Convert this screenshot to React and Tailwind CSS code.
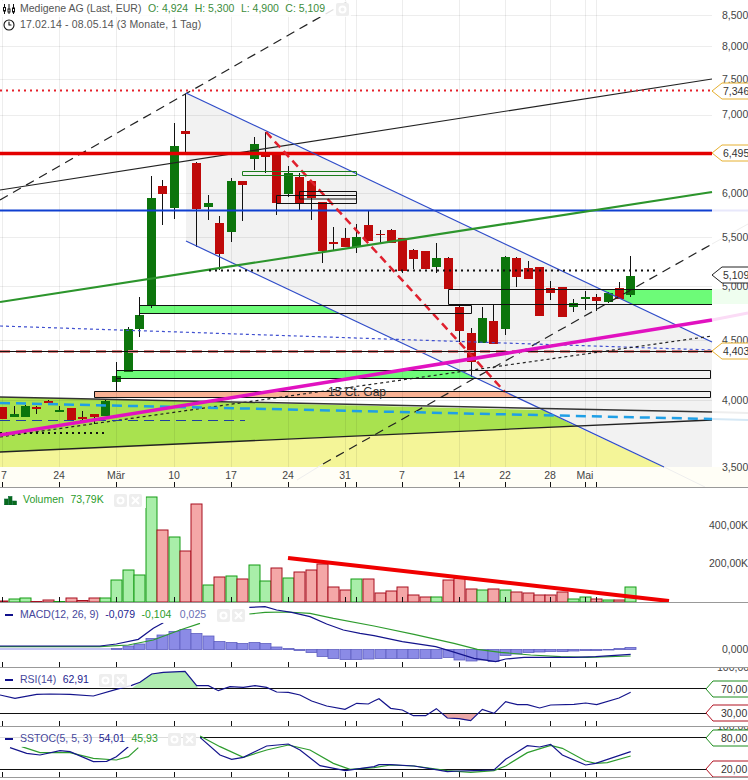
import React from "react";
import { Clock3 } from "lucide-react";

const GREEN = "#0c750c";
const RED = "#bf0a0a";
const TICKS = [2, 59, 116, 174, 231, 288, 345, 356, 402, 459, 505, 550, 585, 596];

// x, wick top, wick bottom, body top, body bottom, up?
const CANDLES = [
  [2, 407, 419, 407, 419, 0], [14, 406, 417, 414, 417, 1], [25, 405, 417, 406, 417, 1], [36, 406, 414, 407, 409, 0],
  [48, 400, 404, 401, 403, 0], [59, 406, 412, 410, 412, 1], [71, 408, 420, 408, 420, 0], [82, 411, 420, 417, 419, 0],
  [94, 414, 424, 414, 417, 0], [105, 400, 416, 401, 416, 1], [116, 370, 392, 376, 382, 1], [128, 327, 372, 329, 372, 1],
  [139, 305, 337, 315, 329, 1], [151, 176, 308, 198, 305, 1], [162, 180, 225, 186, 194, 0], [174, 123, 219, 146, 208, 1],
  [185, 94, 152, 131, 134, 0], [196, 162, 247, 163, 209, 0], [208, 195, 220, 203, 207, 1], [219, 216, 270, 223, 254, 0],
  [231, 178, 242, 181, 232, 1], [242, 181, 221, 181, 185, 0], [254, 137, 170, 144, 159, 1], [265, 132, 173, 153, 157, 0],
  [276, 154, 215, 154, 203, 0], [288, 166, 197, 173, 194, 1], [299, 173, 210, 177, 203, 0], [311, 181, 220, 181, 198, 0],
  [322, 202, 263, 202, 251, 0], [333, 227, 250, 242, 244, 0], [345, 228, 247, 238, 247, 0], [356, 224, 253, 237, 247, 1],
  [368, 210, 241, 225, 241, 0], [380, 230, 243, 234, 235, 0], [391, 229, 243, 230, 243, 0], [402, 238, 273, 238, 271, 0],
  [413, 249, 269, 250, 259, 0], [425, 251, 269, 251, 269, 0], [436, 243, 273, 258, 267, 1], [448, 257, 289, 258, 289, 0],
  [459, 305, 342, 307, 331, 0], [471, 328, 377, 333, 362, 0], [482, 307, 343, 318, 343, 1], [493, 305, 344, 321, 344, 0],
  [505, 256, 335, 257, 329, 1], [516, 257, 287, 258, 277, 0], [528, 261, 279, 268, 279, 0], [539, 267, 316, 267, 316, 0],
  [550, 281, 300, 288, 293, 0], [562, 287, 317, 287, 317, 0], [573, 299, 312, 303, 307, 1], [585, 291, 310, 297, 299, 1],
  [596, 294, 311, 297, 301, 0], [608, 292, 303, 293, 302, 1], [619, 282, 299, 288, 299, 0], [630, 256, 297, 276, 295, 1],
];

// x, top, up?
const VOLUME = [
  [2, 601, 0], [14, 599, 1], [25, 598, 1], [36, 601.5, 0], [48, 600, 0], [59, 601.5, 1], [71, 598, 0], [82, 600.5, 0],
  [94, 598, 0], [105, 598, 1], [116, 580, 1], [128, 570, 1], [139, 575, 1], [151, 497, 1], [162, 530, 0], [174, 537, 1],
  [185, 551, 0], [196, 504, 0], [208, 585, 1], [219, 577, 0], [231, 576, 1], [242, 579, 0], [254, 565, 1], [265, 581, 1],
  [276, 568, 0], [288, 578, 1], [299, 572, 0], [311, 570, 0], [322, 564, 0], [333, 587, 0], [345, 590, 0], [356, 579, 1],
  [368, 579, 0], [380, 593, 0], [391, 591, 0], [402, 587, 0], [413, 595, 0], [425, 597, 0], [436, 597, 1], [448, 580, 0],
  [459, 578, 0], [471, 589, 0], [482, 590, 1], [493, 589, 0], [505, 590, 1], [516, 592, 0], [528, 593, 0], [539, 595, 0],
  [550, 595, 0], [562, 592, 0], [573, 599, 1], [585, 597, 1], [596, 599, 0], [608, 600, 1], [619, 600, 0], [630, 587, 1],
];

const MACD_BARS = [
  [116, 648.5], [128, 646], [139, 644], [151, 638.5], [162, 635], [174, 631.5], [185, 629.5], [196, 633.5], [208, 636],
  [219, 641.5], [231, 642.5], [242, 643.5], [254, 642.5], [265, 643.5], [276, 647], [288, 648.5], [299, 650.5], [311, 652.5],
  [322, 656.5], [333, 658.5], [345, 659.5], [356, 659.5], [368, 659], [380, 658.5], [391, 658.5], [402, 658.5], [413, 658.5],
  [425, 658.5], [436, 658.5], [448, 657.5], [459, 660], [471, 661], [482, 660], [493, 661.5], [505, 655.5], [516, 654],
  [528, 652.5], [539, 652], [550, 651.5], [562, 651.5], [573, 651], [585, 650.5], [596, 650.5], [608, 650], [619, 648.5], [630, 647.5],
];

const left = (pts) => pts.map(([x, y]) => `${x / 3},${600 + y / 3}`).join(" ");
const right = (pts) => pts.map(([x, y]) => `${374 + x / 3},${600 + y / 3}`).join(" ");

const MACD_NAVY = [
  left([[0, 138], [300, 138], [349, 132], [415, 118], [460, 85], [490, 68]]),
  left([[748, 22], [795, 20], [830, 30], [875, 37], [930, 50], [980, 72], [1030, 90], [1080, 100]]) + " " +
    right([[0, 107], [85, 125], [185, 140], [235, 155], [300, 175], [365, 185], [395, 177], [450, 172], [530, 172], [600, 172], [665, 170], [770, 163]]),
];
const MACD_SIGNAL = [
  left([[0, 140], [300, 140], [385, 135], [460, 120], [540, 90], [600, 70]]),
  left([[748, 42], [795, 37], [860, 36], [930, 40], [1000, 55]]) + " " +
    right([[0, 78], [120, 103], [240, 130], [310, 148], [380, 157], [470, 165], [560, 170], [640, 172], [770, 168]]),
];
const RSI_LINE =
  left([[0, 285], [45, 295], [110, 283], [150, 282], [210, 283], [280, 288], [349, 268], [395, 256], [420, 247], [455, 222], [490, 217], [555, 214], [590, 257], [625, 257], [655, 272], [690, 260], [730, 262], [765, 257], [800, 262], [830, 276], [865, 277], [900, 285], [935, 303], [980, 318], [1035, 328], [1070, 310], [1105, 312]]) + " " +
  right([[0, 303], [15, 296], [50, 325], [85, 330], [118, 347], [155, 347], [187, 326], [220, 354], [255, 356], [290, 362], [325, 328], [360, 340], [395, 305], [430, 314], [460, 314], [497, 324], [530, 315], [600, 313], [635, 309], [668, 314], [735, 294], [770, 277]]);
const STOC_NAVY = [
  left([[30, 443], [80, 460], [120, 465], [180, 452], [210, 455], [280, 485], [320, 484], [349, 470], [385, 440]]),
  left([[600, 412], [660, 465], [695, 478], [730, 472], [800, 438], [865, 432], [900, 450], [960, 497], [1036, 512]]) + " " +
    right([[0, 500], [15, 494], [50, 494], [120, 498], [220, 515], [255, 513], [300, 512], [360, 510], [395, 478], [460, 437], [497, 441], [530, 433], [565, 465], [635, 495], [665, 490], [770, 455]]),
];
const STOC_SIGNAL = [
  left([[65, 440], [120, 458], [210, 458], [280, 475], [349, 480], [385, 470], [415, 443]]),
  left([[600, 408], [660, 440], [730, 472], [800, 450], [865, 435], [930, 450], [1000, 490], [1050, 508]]) + " " +
    right([[0, 503], [50, 495], [120, 498], [220, 512], [290, 517], [360, 512], [395, 498], [460, 458], [530, 436], [565, 445], [635, 483], [665, 490], [700, 488], [770, 468]]),
];

const Label = ({ x, y, children, anchor = "start", className = "fill-[#444]" }) => (
  <text x={x} y={y + 3.5} textAnchor={anchor} className={className}>
    {children}
  </text>
);

const Tag = ({ y, tip, body, textX, color, fill = "#fff", children }) => (
  <>
    <polygon
      points={`${tip},${y} ${body},${y - 8} 760,${y - 8} 760,${y + 8} ${body},${y + 8}`}
      fill={fill}
      stroke={color}
    />
    <Label x={textX} y={y} className="fill-[#333]">{children}</Label>
  </>
);

const Ticks = ({ bottom }) =>
  TICKS.map((x) => <line key={x} x1={x + 0.5} x2={x + 0.5} y1={bottom - 5} y2={bottom} stroke="#111" />);

const Line = ({ d, color, width = 1, dash, cap }) => {
  const [x1, y1, x2, y2] = d;
  return <line x1={x1} y1={y1} x2={x2} y2={y2} stroke={color} strokeWidth={width} strokeDasharray={dash} strokeLinecap={cap} />;
};

const Poly = ({ points, color, width = 1.2 }) => <polyline points={points} fill="none" stroke={color} strokeWidth={width} />;

const PaneButton = ({ kind }) => (
  <span className="w-[13px] h-[13px] rounded-[2px] bg-[#eeeeee] flex items-center justify-center">
    <svg width="9" height="9" viewBox="0 0 9 9" fill="none" stroke="#fff" strokeWidth="2">
      {kind === "gear" ? <circle cx="4.5" cy="4.5" r="3" /> : <path d="M1 1l7 7M8 1l-7 7" />}
    </svg>
  </span>
);

const PaneButtons = ({ close = true }) => (
  <span className="flex gap-[2px] ml-1">
    <PaneButton kind="gear" />
    {close && <PaneButton kind="close" />}
  </span>
);

const Dash = () => <span className="block w-[8px] h-[2px] bg-[#11118c] ml-px" />;

const Legend = ({ icon, children }) => (
  <div className="absolute left-0 top-[4px] h-4 flex items-center gap-[6.5px] bg-white/85 pr-1">
    <span className="w-[13.5px] pl-[4px] flex items-center">{icon}</span>
    {children}
  </div>
);

const Pane = ({ top, height, heightClass, legend, children }) => (
  <div className={`relative shrink-0 overflow-hidden border-b border-[#999] ${heightClass}`}>
    <svg className="block" width="748" height={height - 1} viewBox={`0 ${top} 748 ${height - 1}`}>
      {children}
    </svg>
    {legend}
  </div>
);

function MainChart() {
  const prices = [
    ["8,500", 15], ["8,000", 46], ["7,500", 79], ["7,000", 114], ["6,000", 193],
    ["5,500", 237], ["5,000", 286], ["4,500", 340], ["4,000", 400], ["3,500", 467],
  ];
  const dates = [
    ["7", 4], ["24", 59], ["Mär", 116], ["10", 174], ["17", 231], ["24", 288], ["31", 345],
    ["7", 402], ["14", 459], ["22", 505], ["28", 550], ["Mai", 585],
  ];
  return (
    <>
      {/* zones, the channel fill sits on top and cuts them */}
      <polygon points="0,452 575,426 664,467 0,467" fill="#f4f598" />
      <polygon points="0,397 544,410 575,426 0,452" fill="#a9e24f" />
      <rect x="139" y="305" width="332" height="8" fill="#6dfb78" />
      <rect x="116" y="370" width="595" height="8" fill="#6dfb78" />
      <rect x="94" y="391" width="617" height="6" fill="#f8b193" />
      <rect x="448" y="289" width="264" height="15" fill="#6dfb78" />
      <rect x="712" y="289" width="36" height="15" fill="#effeef" />
      <polygon points="186,93 712,342 712,467 664,467 186,241" fill="#f2f2f2" />
      <rect x="0" y="467" width="748" height="20" fill="#fffef6" />

      {[15, 46, 79, 115, 193, 237, 286, 340, 400].map((y) => (
        <line key={y} x1="0" x2="712" y1={y + 0.5} y2={y + 0.5} stroke="#000" strokeOpacity="0.07" />
      ))}
      {TICKS.map((x) => (
        <line key={x} x1={x + 0.5} x2={x + 0.5} y1="0" y2="467" stroke="#000" strokeOpacity="0.07" />
      ))}

      {CANDLES.map(([x, wt, wb, bt, bb, up]) => (
        <g key={x}>
          <line x1={x + 0.5} x2={x + 0.5} y1={wt} y2={wb} stroke="#111" />
          <rect x={x - 4} y={bt} width="9" height={bb - bt} fill={up ? GREEN : RED} />
        </g>
      ))}

      {/* faded parts beyond the plot */}
      <Line d={[712, 320, 748, 313]} color="#fbdcf6" width={3} />
      <Line d={[712, 210.5, 748, 210.5]} color="#e8e8fb" width={2} />
      <Line d={[712, 412, 748, 413]} color="#eeeeee" width={2} />
      <Line d={[712, 419, 748, 420]} color="#d5e8f5" width={2} />
      <Line d={[297, 480, 323, 464]} color="#eeeeee" />
      <Line d={[712, 244, 748, 224]} color="#eeeeee" />
      <Line d={[664, 467, 705, 487]} color="#eeeeee" />

      <Line d={[0, 200, 350, 0]} color="#222" width={1.2} dash="9 6" />
      <Line d={[0, 190, 712, 79]} color="#222" width={1.2} />
      <Line d={[0, 90.5, 712, 90.5]} color="#e5202a" width={2} dash="2 4" />
      <Line d={[0, 153.5, 712, 153.5]} color="#e30000" width={3.5} />
      <Line d={[0, 210.5, 712, 210.5]} color="#0f3fd0" width={2} />
      <Line d={[186, 93, 712, 342]} color="#2f4cc8" width={1.2} />
      <Line d={[186, 241, 664, 467]} color="#2f4cc8" width={1.2} />
      <Line d={[0, 302, 712, 192]} color="#2c952c" width={2.2} />
      <Line d={[209, 270.5, 656, 270.5]} color="#111" width={2} dash="2 4" />
      <Line d={[323, 464, 712, 244]} color="#222" width={1.2} dash="9 6" />
      <Line d={[0, 326, 712, 350]} color="#4050d0" width={1.2} dash="3 3" />
      <Line d={[0, 351.5, 712, 351.5]} color="#d88080" width={3} dash="10 6" />
      <Line d={[0, 351.5, 712, 351.5]} color="#111" />
      <Line d={[0, 437, 712, 336]} color="#222" width={1.2} dash="3 3" />
      <Line d={[266, 132, 505, 392]} color="#e0202e" width={2.5} dash="8 5" />

      <path d="M139.5 305.5H471.5V313.5H139.5Z" fill="none" stroke="#111" />
      <path d="M116.5 370.5H710.5V378.5H116.5Z" fill="none" stroke="#111" />
      <path d="M94.5 391.5H710.5V397.5H94.5Z" fill="none" stroke="#111" />
      <path d="M712 289.5H448.5V304.5H712" fill="none" stroke="#111" />
      <path d="M242.5 171.5H356.5V175.5H242.5Z" fill="none" stroke="#1c7c1c" />
      <path d="M276.5 195.5H356.5V203.5H276.5Z" fill="none" stroke="#111" />
      <path d="M299.5 191.5H356.5V199H299.5Z" fill="none" stroke="#111" />
      <line x1="116.5" x2="116.5" y1="362" y2="392" stroke="#111" />
      <line x1="139.5" x2="139.5" y1="297" y2="316" stroke="#111" />

      <Line d={[0, 397, 712, 412]} color="#333" width={1.5} />
      <Line d={[0, 452, 712, 420]} color="#222" width={1.3} />
      <Line d={[0, 403, 712, 419]} color="#1f9fe6" width={2.5} dash="10 6" />
      <Line d={[0, 420.5, 245, 420.5]} color="#2040a0" dash="10 6" />
      <Line d={[0, 433, 106, 433]} color="#111" width={2} dash="2 4" />
      <Line d={[0, 435, 712, 320]} color="#e112c0" width={3.5} />

      <text x="328" y="396" className="fill-[#333] text-[12px]">15 Ct. Gap</text>

      {prices.map(([label, y]) => <Label key={label} x="722" y={y}>{label}</Label>)}
      <Tag y={91} tip={712} body={722} textX={723} color="#e6b030">7,346</Tag>
      <Tag y={153} tip={712} body={722} textX={723} color="#e6b030">6,495</Tag>
      <Tag y={275} tip={712} body={722} textX={723} color="#222">5,109</Tag>
      <Tag y={351} tip={712} body={722} textX={723} color="#e6b030">4,403</Tag>

      {dates.map(([label, x]) => <Label key={`${label}${x}`} x={x} y={475} anchor="middle">{label}</Label>)}
      <Ticks bottom={487} />
    </>
  );
}

export default function App() {
  return (
    <div className="w-[748px] h-[780px] overflow-hidden bg-white flex flex-col font-['Liberation_Sans',Arial,sans-serif] text-[10.5px] text-[#555]">
      <Pane
        top={0}
        height={488}
        heightClass="h-[488px]"
        legend={
          <div className="absolute left-0 top-[1px] flex flex-col">
            <div className="h-4 flex items-center gap-[6.5px] bg-white/85 pr-0.5">
              <span className="w-[13.5px] pl-[3px] flex items-center">
                <svg width="12" height="10" viewBox="0 0 12 10" fill="#fff" stroke="#111" strokeWidth="1" className="shrink-0">
                  <path d="M1.5 0v10M6 0v10M10.5 0v10" />
                  <rect x="0.5" y="3.5" width="2" height="3.5" />
                  <rect x="5" y="5" width="2" height="3" />
                  <rect x="9.5" y="4" width="2" height="4" />
                </svg>
              </span>
              <span>Medigene AG (Last, EUR)</span>
              <span className="text-[#3c8c3c]">O: 4,924</span>
              <span className="text-[#3c8c3c]">H: 5,300</span>
              <span className="text-[#3c8c3c]">L: 4,900</span>
              <span className="text-[#3c8c3c]">C: 5,109</span>
              <PaneButtons close={false} />
            </div>
            <div className="h-4 flex items-center gap-[6.5px]">
              <span className="w-[13.5px] pl-[3px] flex items-center">
                <Clock3 size={12} strokeWidth={2.2} color="#111" className="shrink-0" />
              </span>
              <span className="tracking-[0.14px]">17.02.14 - 08.05.14 (3 Monate, 1 Tag)</span>
            </div>
          </div>
        }
      >
        <MainChart />
      </Pane>

      <Pane
        top={488}
        height={115}
        heightClass="h-[115px]"
        legend={
          <Legend
            icon={
              <svg width="13" height="9" viewBox="0 0 13 9" fill="#0a6a1a" stroke="#063" strokeWidth="0.6" className="shrink-0">
                <rect x="0.5" y="3" width="3.5" height="6" />
                <rect x="4.5" y="0.5" width="3.5" height="8.5" />
                <rect x="8.5" y="5" width="4" height="4" />
              </svg>
            }
          >
            <span className="text-[#2c9c2c] ml-[3px]">Volumen</span>
            <span className="text-[#2c9c2c]">73,79K</span>
            <PaneButtons />
          </Legend>
        }
      >
        {VOLUME.map(([x, top, up]) => (
          <rect
            key={x}
            x={x - 5}
            y={top}
            width="11"
            height={602 - top}
            fill={up ? "#a9eea9" : "#f4a7a7"}
            stroke={up ? "#159c15" : "#a70f1f"}
          />
        ))}
        <Ticks bottom={602} />
        <Line d={[288, 558, 669, 601]} color="#f00000" width={4} />
        <Label x="709" y={525}>400,00K</Label>
        <Label x="709" y={563}>200,00K</Label>
      </Pane>

      <Pane
        top={603}
        height={65}
        heightClass="h-[65px]"
        legend={
          <Legend icon={<Dash />}>
            <span className="text-[#46479b]">MACD(12, 26, 9)</span>
            <span className="text-[#23238f]">-0,079</span>
            <span className="text-[#2c9c2c]">-0,104</span>
            <span className="text-[#6a6fb4] ml-[2px]">0,025</span>
            <PaneButtons />
          </Legend>
        }
      >
        <rect x="0" y="648.5" width="110" height="1" fill="#8a8ae8" />
        {MACD_BARS.map(([x, y]) => {
          const up = y < 649.5;
          return (
            <rect
              key={x}
              x={x - 5}
              y={up ? y : 649.5}
              width="11"
              height={Math.abs(y - 649.5)}
              fill="#8b8be6"
              stroke="#5f5fc0"
              strokeWidth="0.8"
            />
          );
        })}
        <Ticks bottom={667} />
        {MACD_SIGNAL.map((p) => <Poly key={p} points={p} color="#2e9c2e" />)}
        {MACD_NAVY.map((p) => <Poly key={p} points={p} color="#14148c" />)}
        <Label x="722" y={649}>0,000</Label>
      </Pane>

      <Pane
        top={668}
        height={59}
        heightClass="h-[59px]"
        legend={
          <Legend icon={<Dash />}>
            <span className="text-[#46479b]">RSI(14)</span>
            <span className="text-[#23238f]">62,91</span>
            <PaneButtons />
          </Legend>
        }
      >
        <polygon points="131.7,688.5 140,682.3 151.7,674 163.3,672.3 185,671.3 196.7,685.7 198,688.5" fill="#b0ecb0" />
        <polygon points="442,713.3 447.3,718 459,718.7 470.7,720.7 477.5,713.3" fill="#eba8a8" />
        <Label x="717" y={667}>100,00</Label>
        <Line d={[0, 688.5, 706, 688.5]} color="#111" />
        <Line d={[0, 713.5, 706, 713.5]} color="#111" />
        <Ticks bottom={726} />
        <Poly points={RSI_LINE} color="#14148c" />
        <Tag y={689} tip={706} body={713} textX={721} color="#1c8c1c">70,00</Tag>
        <Tag y={713} tip={706} body={713} textX={721} color="#b01020">30,00</Tag>
      </Pane>

      <Pane
        top={727}
        height={51}
        heightClass="h-[51px]"
        legend={
          <Legend icon={<Dash />}>
            <span className="text-[#46479b]">SSTOC(5, 5, 3)</span>
            <span className="text-[#23238f]">54,01</span>
            <span className="text-[#2c9c2c]">45,93</span>
            <PaneButtons />
          </Legend>
        }
      >
        <Label x="717" y={726}>100,00</Label>
        <Line d={[0, 737.5, 706, 737.5]} color="#111" />
        <Line d={[0, 769.5, 706, 769.5]} color="#111" />
        <Ticks bottom={777} />
        {STOC_SIGNAL.map((p) => <Poly key={p} points={p} color="#2e9c2e" />)}
        {STOC_NAVY.map((p) => <Poly key={p} points={p} color="#14148c" />)}
        <Tag y={738} tip={706} body={713} textX={721} color="#1c8c1c">80,00</Tag>
        <Tag y={769} tip={706} body={713} textX={721} color="#b01020">20,00</Tag>
      </Pane>

      <div className="h-[2px] overflow-hidden pl-[717px] leading-[12px] text-[#444]">100,00</div>
    </div>
  );
}
